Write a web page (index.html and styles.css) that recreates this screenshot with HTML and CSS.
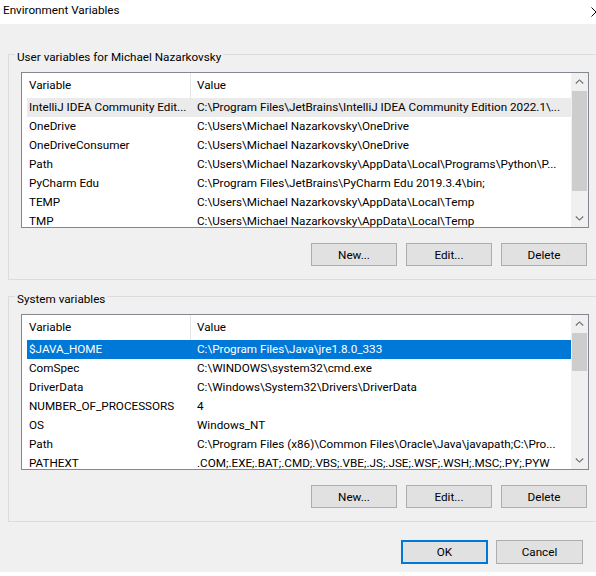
FILE: index.html
```html
<!DOCTYPE html>
<html lang="en">
  <head>
    <meta charset="UTF-8" />
    <meta name="viewport" content="width=device-width, initial-scale=1.0" />
    <title>Environment Variables</title>
    <link rel="stylesheet" href="styles.css">
  </head>
  <body>
    <div class="dialog">
      <div class="titlebar">
        <span class="title">Environment Variables</span>
        <svg class="close" width="10" height="10" viewBox="0 0 10 10">
          <path d="M0.5 0.5L9.5 9.5M9.5 0.5L0.5 9.5" stroke="#000" stroke-width="1" />
        </svg>
      </div>

      <div class="content">
        <section class="group">
          <div class="group-title">User variables for Michael Nazarkovsky</div>

          <div class="list">
            <div class="list-body">
              <div class="row head">
                <div class="cell name">Variable</div>
                <div class="cell value">Value</div>
              </div>
              <div class="row inactive">
                <div class="cell name">IntelliJ IDEA Community Edit...</div>
                <div class="cell value">C:\Program Files\JetBrains\IntelliJ IDEA Community Edition 2022.1\...</div>
              </div>
              <div class="row">
                <div class="cell name">OneDrive</div>
                <div class="cell value">C:\Users\Michael Nazarkovsky\OneDrive</div>
              </div>
              <div class="row">
                <div class="cell name">OneDriveConsumer</div>
                <div class="cell value">C:\Users\Michael Nazarkovsky\OneDrive</div>
              </div>
              <div class="row">
                <div class="cell name">Path</div>
                <div class="cell value">C:\Users\Michael Nazarkovsky\AppData\Local\Programs\Python\P...</div>
              </div>
              <div class="row">
                <div class="cell name">PyCharm Edu</div>
                <div class="cell value">C:\Program Files\JetBrains\PyCharm Edu 2019.3.4\bin;</div>
              </div>
              <div class="row">
                <div class="cell name">TEMP</div>
                <div class="cell value">C:\Users\Michael Nazarkovsky\AppData\Local\Temp</div>
              </div>
              <div class="row">
                <div class="cell name">TMP</div>
                <div class="cell value">C:\Users\Michael Nazarkovsky\AppData\Local\Temp</div>
              </div>
            </div>

            <div class="scrollbar">
              <div class="arrow">
                <svg width="9" height="5" viewBox="0 0 9 5"><polyline points="0.8,4.5 4.5,0.9 8.2,4.5" fill="none" stroke="#6d6d6d" stroke-width="1.1" /></svg>
              </div>
              <div class="track">
                <div class="thumb thumb-user"></div>
              </div>
              <div class="arrow">
                <svg width="9" height="5" viewBox="0 0 9 5"><polyline points="0.8,0.5 4.5,4.1 8.2,0.5" fill="none" stroke="#6d6d6d" stroke-width="1.1" /></svg>
              </div>
            </div>
          </div>

          <div class="buttons">
            <button class="btn">New...</button>
            <button class="btn">Edit...</button>
            <button class="btn">Delete</button>
          </div>
        </section>

        <section class="group">
          <div class="group-title">System variables</div>

          <div class="list">
            <div class="list-body">
              <div class="row head">
                <div class="cell name">Variable</div>
                <div class="cell value">Value</div>
              </div>
              <div class="row selected">
                <div class="cell name">$JAVA_HOME</div>
                <div class="cell value">C:\Program Files\Java\jre1.8.0_333</div>
              </div>
              <div class="row">
                <div class="cell name">ComSpec</div>
                <div class="cell value">C:\WINDOWS\system32\cmd.exe</div>
              </div>
              <div class="row">
                <div class="cell name">DriverData</div>
                <div class="cell value">C:\Windows\System32\Drivers\DriverData</div>
              </div>
              <div class="row">
                <div class="cell name">NUMBER_OF_PROCESSORS</div>
                <div class="cell value">4</div>
              </div>
              <div class="row">
                <div class="cell name">OS</div>
                <div class="cell value">Windows_NT</div>
              </div>
              <div class="row">
                <div class="cell name">Path</div>
                <div class="cell value">C:\Program Files (x86)\Common Files\Oracle\Java\javapath;C:\Pro...</div>
              </div>
              <div class="row">
                <div class="cell name">PATHEXT</div>
                <div class="cell value">.COM;.EXE;.BAT;.CMD;.VBS;.VBE;.JS;.JSE;.WSF;.WSH;.MSC;.PY;.PYW</div>
              </div>
            </div>

            <div class="scrollbar">
              <div class="arrow">
                <svg width="9" height="5" viewBox="0 0 9 5"><polyline points="0.8,4.5 4.5,0.9 8.2,4.5" fill="none" stroke="#6d6d6d" stroke-width="1.1" /></svg>
              </div>
              <div class="track">
                <div class="thumb thumb-system"></div>
              </div>
              <div class="arrow">
                <svg width="9" height="5" viewBox="0 0 9 5"><polyline points="0.8,0.5 4.5,4.1 8.2,0.5" fill="none" stroke="#6d6d6d" stroke-width="1.1" /></svg>
              </div>
            </div>
          </div>

          <div class="buttons">
            <button class="btn">New...</button>
            <button class="btn">Edit...</button>
            <button class="btn">Delete</button>
          </div>
        </section>
      </div>

      <div class="footer">
        <button class="btn btn-default">OK</button>
        <button class="btn">Cancel</button>
      </div>
    </div>
  </body>
</html>
```

FILE: styles.css
```css
body {
  margin: 0;
  background: #fff;
  overflow: hidden;
  font-family: Roboto, "Liberation Sans", sans-serif;
  font-size: 11.7px;
  color: #000;
}

.dialog {
  height: 572px;
  background: #f0f0f0;
  display: flex;
  flex-direction: column;
}

.titlebar {
  height: 24px;
  flex-shrink: 0;
  box-sizing: border-box;
  padding-left: 3px;
  background: #fff;
  display: flex;
  align-items: flex-start;
  line-height: 20px;
  overflow: hidden;
}

.titlebar .close {
  margin-left: auto;
  margin-right: -5px;
  margin-top: 7px;
  flex-shrink: 0;
}

.content {
  padding: 30px 0 0 8px;
}

.group {
  position: relative;
  margin-right: -20px;
  padding: 17px 0 13px 12px;
  border: 1px solid #dcdcdc;
}

.group + .group {
  margin-top: 16px;
}

.group-title {
  position: absolute;
  top: -5px;
  left: 6px;
  padding: 0 2px;
  line-height: 15px;
  background: #f0f0f0;
}

.list {
  width: 568px;
  height: 156px;
  box-sizing: border-box;
  border: 1px solid #828790;
  background: #fff;
  display: flex;
}

.list-body {
  flex: 1;
  min-width: 0;
  padding-left: 5px;
  overflow: hidden;
}

.row {
  display: flex;
  height: 19px;
  line-height: 19px;
  white-space: nowrap;
}

.row.head {
  height: 25px;
  line-height: 25px;
}

.row.inactive {
  background: #ebebeb;
}

.row.selected {
  background: #0078d7;
  color: #fff;
}

.cell {
  overflow: hidden;
}

.cell.name {
  width: 164px;
  flex-shrink: 0;
  box-sizing: border-box;
  padding-left: 2px;
}

.row.head .cell.name {
  border-right: 1px solid #e5e5e5;
}

.cell.value {
  flex: 1;
  padding-left: 6px;
}

.scrollbar {
  width: 17px;
  flex-shrink: 0;
  background: #f0f0f0;
  display: flex;
  flex-direction: column;
}

.scrollbar .arrow {
  height: 17px;
  display: flex;
  align-items: center;
  justify-content: center;
}

.scrollbar .track {
  flex: 1;
  padding: 1px 1px 0 1px;
}

.thumb {
  background: #cdcdcd;
}

.thumb-user {
  height: 100px;
}

.thumb-system {
  height: 38px;
}

.buttons {
  width: 568px;
  box-sizing: border-box;
  margin-top: 15px;
  padding-right: 2px;
  display: flex;
  justify-content: flex-end;
  gap: 9px;
}

.btn {
  width: 86px;
  height: 23px;
  padding: 0;
  background: #e1e1e1;
  border: 1px solid #adadad;
  border-radius: 0;
  font-family: inherit;
  font-size: inherit;
  color: #000;
}

.footer {
  margin-top: 18px;
  padding-right: 13px;
  display: flex;
  justify-content: flex-end;
  gap: 8px;
}

.footer .btn {
  width: 87px;
  height: 24px;
}

.footer .btn-default {
  border: 2px solid #0078d7;
}
```
